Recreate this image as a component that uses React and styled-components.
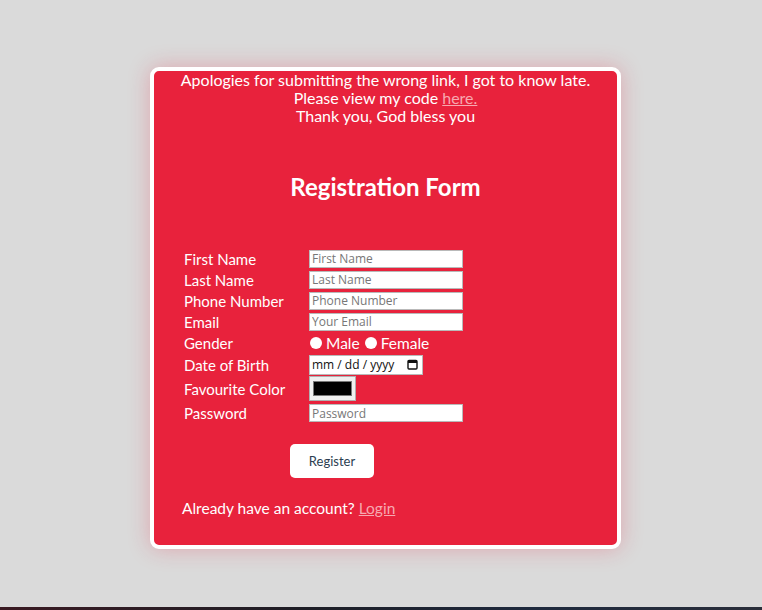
import React from "react";
import styled, { createGlobalStyle } from "styled-components";

const Global = createGlobalStyle`
  html, body { margin: 0; padding: 0; }
  body { background: #dadada; font-family: "Lato", "Open Sans", sans-serif; }
`;

const Page = styled.div`
  height: 610px;
  display: flex;
  flex-direction: column;
`;

const Stage = styled.div`
  flex: 1;
  display: flex;
  justify-content: flex-start;
  align-items: flex-start;
  padding: 67px 0 0 150px;
`;

const BottomStrip = styled.div`
  height: 3px;
  background: linear-gradient(90deg, #3a1a22, #1e1e26 40%, #1f2a3e 70%, #2a2e3a);
`;

const Card = styled.div`
  width: 463px;
  height: 474px;
  background: #e8223c;
  border: 4px solid #ffffff;
  border-radius: 9px;
  box-shadow: 0 0 22px rgba(232, 34, 60, 0.28);
  color: #ffffff;
  display: flex;
  flex-direction: column;
  align-items: center;
`;

const Notice = styled.p`
  margin: 0;
  font-size: 16px;
  line-height: 18px;
  text-align: center;
`;

const PinkLink = styled.a`
  color: #f7a8b0;
  text-decoration: underline;
`;

const Title = styled.h2`
  margin: 48px 0 0;
  font-size: 24px;
  line-height: 28px;
  font-weight: 700;
`;

const FormGrid = styled.div`
  align-self: flex-start;
  margin: 47px 0 0 30px;
  display: grid;
  grid-template-columns: 125px auto;
  grid-template-rows: 21px 21px 21px 21px 21px 23px 25px 24px;
  align-items: center;
  font-size: 15px;
`;

const Label = styled.label`
  line-height: 18px;
`;

const TextInput = styled.input`
  box-sizing: border-box;
  width: 154px;
  height: 18px;
  padding: 0 2px;
  border: 1px solid #b9b9b9;
  background: #fff;
  font-family: "Open Sans", sans-serif;
  font-size: 12px;
  color: #333;
  outline: none;
  &::placeholder { color: #777; }
`;

const RadioGroup = styled.div`
  display: flex;
  align-items: center;
  gap: 4px;
  font-size: 15.5px;
`;

const Radio = styled.span`
  width: 12px;
  height: 12px;
  border-radius: 50%;
  background: #fff;
  display: inline-block;
  margin-left: 1px;
`;

const DateBox = styled.div`
  box-sizing: border-box;
  width: 114px;
  height: 20px;
  border: 1px solid #b9b9b9;
  background: #fff;
  display: flex;
  align-items: center;
  justify-content: space-between;
  padding: 0 4px 0 2px;
  color: #111;
  font-family: "Open Sans", sans-serif;
  font-size: 12px;
`;

const ColorBox = styled.div`
  box-sizing: border-box;
  width: 47px;
  height: 25px;
  border: 1px solid #b0b0b0;
  background: #efefef;
  padding: 4px 3px;
  display: flex;
`;

const Swatch = styled.div`
  flex: 1;
  background: #000;
  border: 1px solid #777;
`;

const Button = styled.button`
  align-self: flex-start;
  margin: 19px 0 0 136px;
  width: 84px;
  height: 34px;
  background: #fff;
  border: none;
  border-radius: 5px;
  color: #2c3e50;
  font-family: "Lato", sans-serif;
  font-size: 13px;
`;

const Footer = styled.p`
  align-self: flex-start;
  margin: 21px 0 0 28px;
  font-size: 15.5px;
  line-height: 18px;
`;

const CalendarIcon = () => (
  <svg width="11" height="11" viewBox="0 0 11 11">
    <rect x="1" y="1.5" width="9" height="8.5" rx="1" fill="none" stroke="#111" strokeWidth="1.4" />
    <rect x="1" y="1.5" width="9" height="2.5" fill="#111" />
  </svg>
);

export default function App() {
  return (
    <Page>
      <Global />
      <Stage>
        <Card>
          <Notice>
            Apologies for submitting the wrong link, I got to know late.
            <br />
            Please view my code <PinkLink href="#">here.</PinkLink>
            <br />
            Thank you, God bless you
          </Notice>
          <Title>Registration Form</Title>
          <FormGrid>
            <Label>First Name</Label>
            <TextInput placeholder="First Name" />
            <Label>Last Name</Label>
            <TextInput placeholder="Last Name" />
            <Label>Phone Number</Label>
            <TextInput placeholder="Phone Number" />
            <Label>Email</Label>
            <TextInput placeholder="Your Email" />
            <Label>Gender</Label>
            <RadioGroup>
              <Radio /> Male <Radio /> Female
            </RadioGroup>
            <Label>Date of Birth</Label>
            <DateBox>
              <span>mm / dd / yyyy</span>
              <CalendarIcon />
            </DateBox>
            <Label>Favourite Color</Label>
            <ColorBox>
              <Swatch />
            </ColorBox>
            <Label>Password</Label>
            <TextInput type="password" placeholder="Password" />
          </FormGrid>
          <Button>Register</Button>
          <Footer>
            Already have an account? <PinkLink href="#">Login</PinkLink>
          </Footer>
        </Card>
      </Stage>
      <BottomStrip />
    </Page>
  );
}
